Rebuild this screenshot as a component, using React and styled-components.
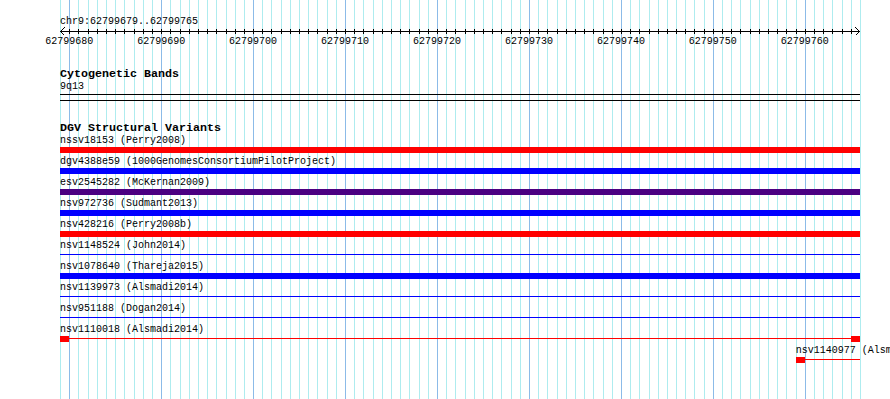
import React from "react";
import styled, { createGlobalStyle } from "styled-components";

const VIEW_START = 62799679;
const VIEW_END = 62799765;
const BASES = VIEW_END - VIEW_START + 1;
const TRACK_WIDTH = 800;
const LEFT = 60;
const PX = TRACK_WIDTH / BASES;

const GlobalStyle = createGlobalStyle`
  html, body {
    margin: 0;
    padding: 0;
    background: #ffffff;
  }
`;

const Page = styled.div`
  position: relative;
  width: 890px;
  height: 399px;
  overflow: hidden;
  background: #ffffff;
  font-family: "Liberation Mono", "DejaVu Sans Mono", monospace;
  color: #000000;
`;

const GridLayer = styled.svg`
  position: absolute;
  top: 0;
  left: 0;
  display: block;
`;

const Content = styled.div`
  position: relative;
  padding: 16px 0 0 ${LEFT}px;
  width: ${TRACK_WIDTH}px;
`;

const RangeLabel = styled.div`
  font-size: 10px;
  line-height: 12px;
  white-space: nowrap;
`;

const RulerSvg = styled.svg`
  display: block;
  overflow: visible;
`;

const Section = styled.section`
  margin-top: ${(p) => p.$gap}px;
`;

const TrackTitle = styled.div`
  font-size: 11.67px;
  font-weight: bold;
  line-height: 14px;
  white-space: nowrap;
`;

const SmallLabel = styled.div`
  font-size: 10px;
  line-height: 12px;
  white-space: nowrap;
`;

const Band = styled.div`
  margin-top: 1px;
  height: 5px;
  border-top: 1px solid #000000;
  border-bottom: 1px solid #000000;
`;

const FeatureRow = styled.div`
  height: 21px;
`;

const FeatureTrack = styled.div`
  width: ${TRACK_WIDTH}px;
  height: 6px;
  overflow: hidden;
`;

const Feature = styled.div`
  display: flex;
  align-items: flex-start;
  height: 6px;
`;

const Bar = styled.div`
  flex: 1;
  height: 6px;
  background: ${(p) => p.$color};
`;

const Line = styled.div`
  flex: 1;
  height: 1px;
  margin-top: 2px;
  background: ${(p) => p.$color};
`;

const EndBox = styled.div`
  flex: 0 0 ${PX}px;
  height: 6px;
  background: ${(p) => p.$color};
`;

const RED = "#ff0000";
const BLUE = "#0000ff";
const INDIGO = "#4b0082";

const variants = [
  { name: "nssv18153 (Perry2008)", color: RED, kind: "bar" },
  { name: "dgv4388e59 (1000GenomesConsortiumPilotProject)", color: BLUE, kind: "bar" },
  { name: "esv2545282 (McKernan2009)", color: INDIGO, kind: "bar" },
  { name: "nsv972736 (Sudmant2013)", color: BLUE, kind: "bar" },
  { name: "nsv428216 (Perry2008b)", color: RED, kind: "bar" },
  { name: "nsv1148524 (John2014)", color: BLUE, kind: "line" },
  { name: "nsv1078640 (Thareja2015)", color: BLUE, kind: "bar" },
  { name: "nsv1139973 (Alsmadi2014)", color: BLUE, kind: "line" },
  { name: "nsv951188 (Dogan2014)", color: BLUE, kind: "line" },
  { name: "nsv1110018 (Alsmadi2014)", color: RED, kind: "split", boxes: [true, true] },
  { name: "nsv1140977 (Alsmadi2014)", color: RED, kind: "split", start: 80, end: 100, boxes: [true, false] },
];

const Grid = () => {
  const lines = [];
  for (let i = 0; i <= BASES; i++) {
    const x = Math.round(LEFT + i * PX) + 0.5;
    const major = (VIEW_START + i) % 10 === 0;
    lines.push(
      <line
        key={i}
        x1={x}
        x2={x}
        y1={0}
        y2={399}
        stroke={major ? "#8cbbe8" : "#aeecef"}
        strokeWidth={1}
      />
    );
  }
  return (
    <GridLayer width={890} height={399} shapeRendering="crispEdges">
      {lines}
    </GridLayer>
  );
};

const Ruler = () => {
  const ticks = [];
  const labels = [];
  for (let i = 1; i < BASES; i++) {
    const x = Math.round(i * PX) + 0.5;
    ticks.push(<line key={i} x1={x} x2={x} y1={1} y2={6} stroke="#000" />);
    if ((VIEW_START + i) % 10 === 0) {
      labels.push(
        <text
          key={i}
          x={i * PX}
          y={15.5}
          textAnchor="middle"
          fontSize={10}
          fontFamily='"Liberation Mono", monospace'
          fill="#000"
        >
          {VIEW_START + i}
        </text>
      );
    }
  }
  return (
    <RulerSvg width={TRACK_WIDTH} height={20} shapeRendering="crispEdges">
      <line x1={0} x2={TRACK_WIDTH} y1={3.5} y2={3.5} stroke="#000" />
      <polyline points="4.5,-0.5 0.5,3.5 4.5,7.5" fill="none" stroke="#000" />
      <polyline
        points={`${TRACK_WIDTH - 4.5},-0.5 ${TRACK_WIDTH - 0.5},3.5 ${TRACK_WIDTH - 4.5},7.5`}
        fill="none"
        stroke="#000"
      />
      {ticks}
      {labels}
    </RulerSvg>
  );
};

const VariantRow = ({ v }) => {
  const start = v.start ?? 0;
  const end = Math.min(v.end ?? BASES, BASES + 20);
  const offset = start * PX;
  const width = (end - start) * PX;

  let body;
  if (v.kind === "bar") {
    body = <Bar $color={v.color} />;
  } else if (v.kind === "line") {
    body = <Line $color={v.color} />;
  } else {
    body = (
      <>
        {v.boxes[0] && <EndBox $color={v.color} />}
        <Line $color={v.color} />
        {v.boxes[1] && <EndBox $color={v.color} />}
      </>
    );
  }

  return (
    <FeatureRow>
      <SmallLabel style={{ marginLeft: offset }}>{v.name}</SmallLabel>
      <FeatureTrack>
        <Feature style={{ marginLeft: offset, width }}>{body}</Feature>
      </FeatureTrack>
    </FeatureRow>
  );
};

export default function App() {
  return (
    <>
      <GlobalStyle />
      <Page>
        <Grid />
        <Content>
          <RangeLabel>
            chr9:{VIEW_START}..{VIEW_END}
          </RangeLabel>
          <Ruler />

          <Section $gap={19}>
            <TrackTitle>Cytogenetic Bands</TrackTitle>
            <SmallLabel>9q13</SmallLabel>
            <Band />
          </Section>

          <Section $gap={20}>
            <TrackTitle>DGV Structural Variants</TrackTitle>
            {variants.map((v) => (
              <VariantRow key={v.name} v={v} />
            ))}
          </Section>
        </Content>
      </Page>
    </>
  );
}
